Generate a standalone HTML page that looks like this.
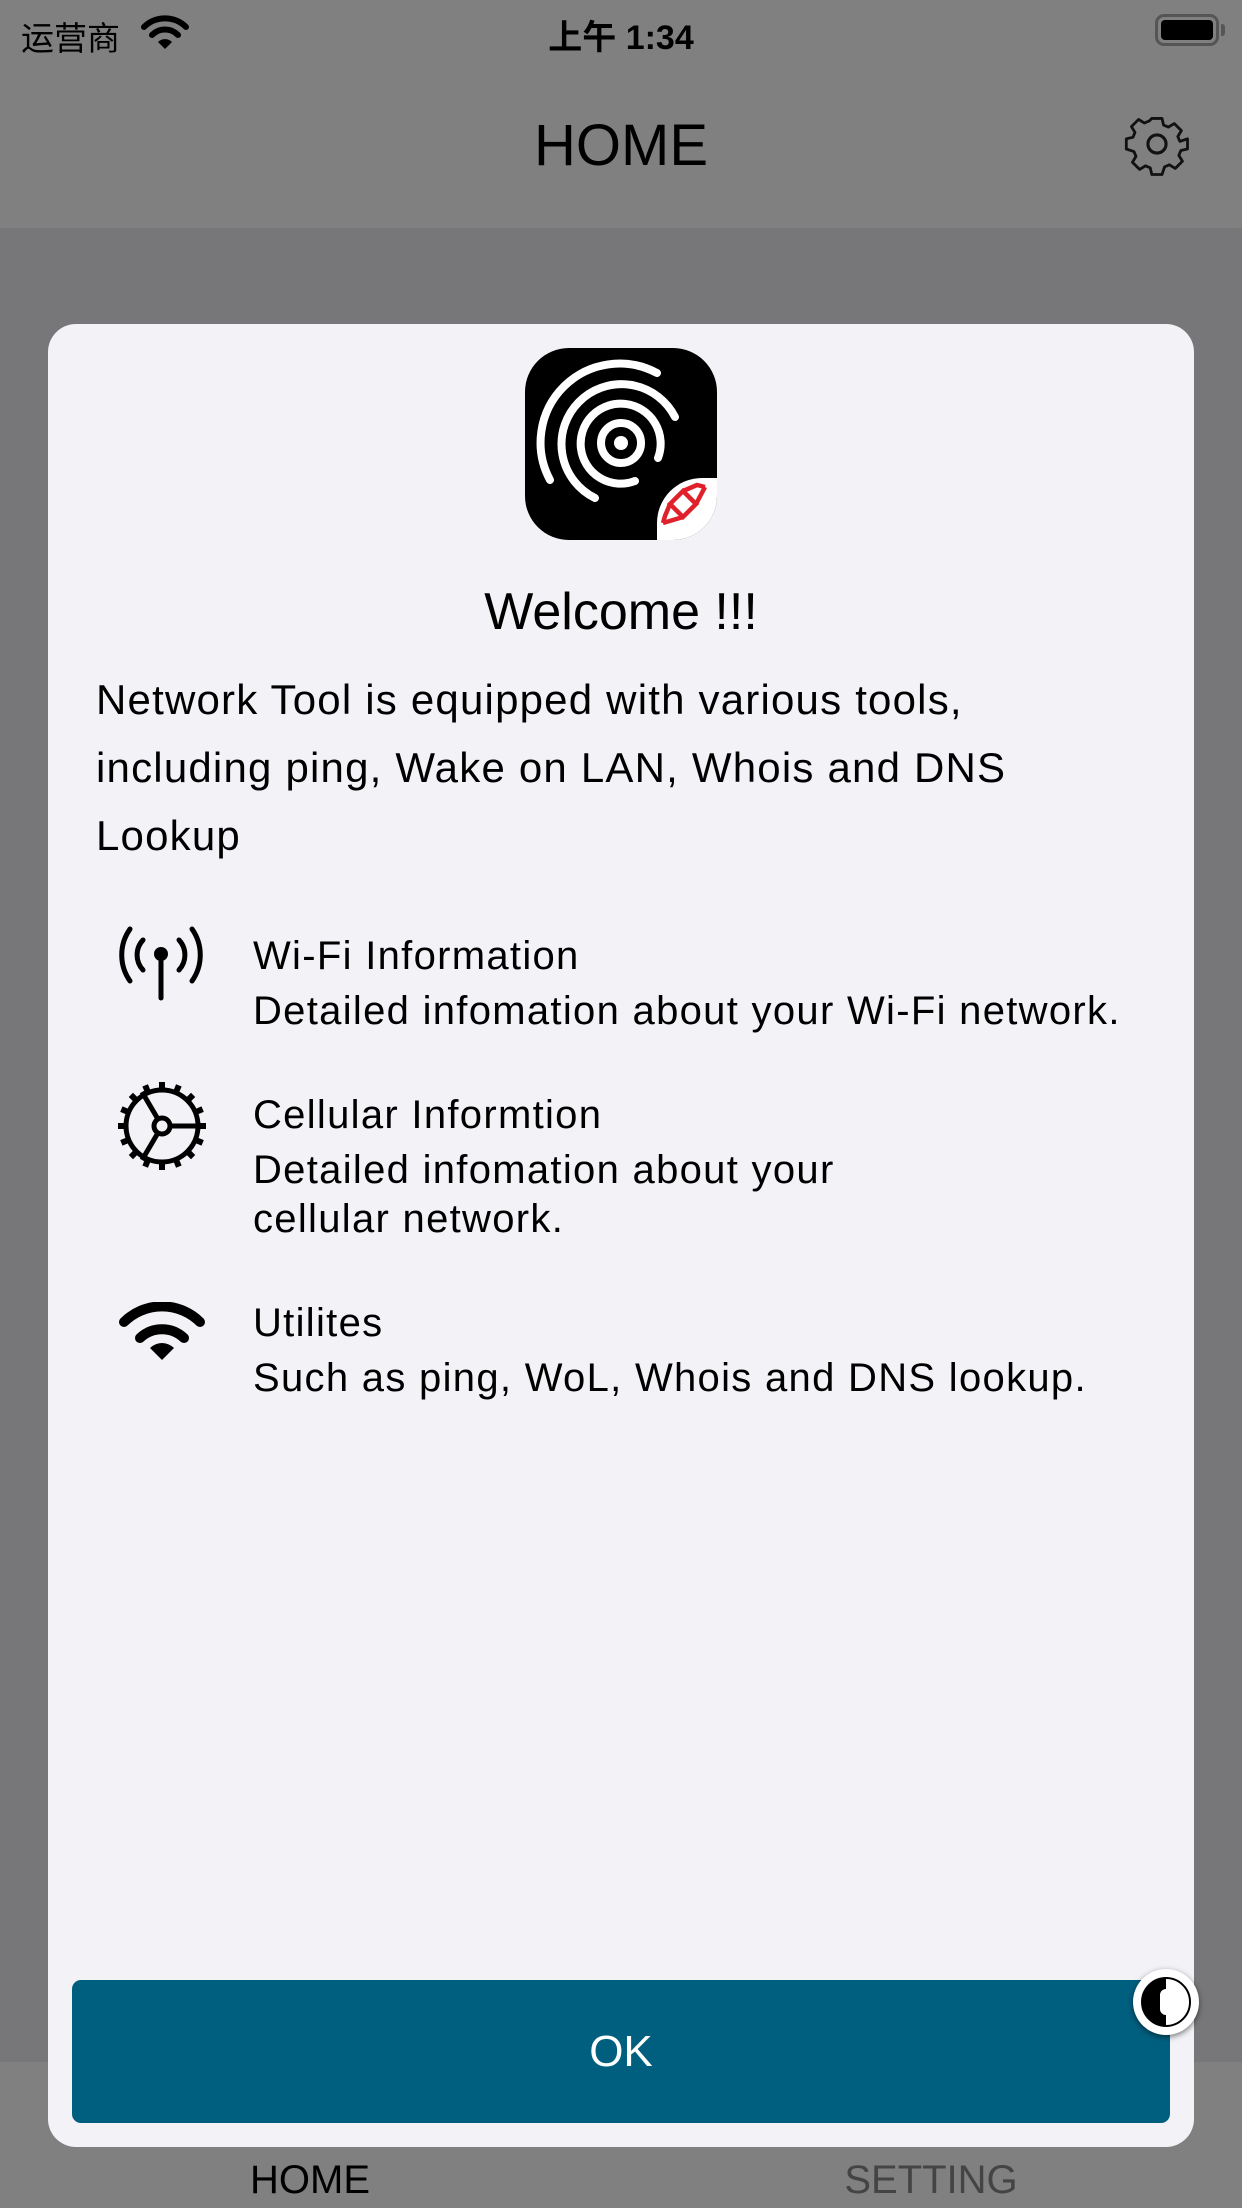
<!DOCTYPE html>
<html><head><meta charset="utf-8"><style>
*{margin:0;padding:0;box-sizing:border-box}
body{width:1242px;height:2208px;position:relative;overflow:hidden;background:#77777a;font-family:"Liberation Sans","Noto Sans CJK SC",sans-serif;color:#000}
.abs{position:absolute}
.top{left:0;top:0;width:1242px;height:228px;background:#808080}
.tab{left:0;top:2062px;width:1242px;height:146px;background:#808080}
.card{left:48px;top:324px;width:1146px;height:1823px;background:#f2f2f7;border-radius:28px}
.t{position:absolute;white-space:nowrap}
.it{font-size:40px;letter-spacing:1.3px}
</style></head><body>
<div class="abs top"></div>
<div class="abs tab"></div>
<div class="t" style="left:21px;top:12px;font-size:33px">运营商</div>
<svg class="abs" style="left:140px;top:14px" width="50" height="36" viewBox="0 0 50 36"><path d="M4 13 A30 30 0 0 1 46 13" stroke="#000" stroke-width="6" fill="none" stroke-linecap="round"/><path d="M12 21 A18 18 0 0 1 38 21" stroke="#000" stroke-width="6" fill="none" stroke-linecap="round"/><path d="M18 28 L25 35 L32 28 A10 10 0 0 0 18 28Z" fill="#000"/></svg>
<div class="t" style="left:0;width:1242px;text-align:center;top:10px;font-size:34px;font-weight:bold">上午 1:34</div>
<div class="abs" style="left:1155px;top:14px;width:64px;height:32px;border:3px solid #555;border-radius:9px;padding:3px"><div style="width:100%;height:100%;background:#000;border-radius:4px"></div></div>
<div class="abs" style="left:1221px;top:24px;width:4px;height:12px;background:#555;border-radius:0 3px 3px 0"></div>
<div class="t" style="left:0;width:1242px;text-align:center;top:112px;font-size:58px">HOME</div>
<svg class="abs" style="left:1123px;top:110px" width="68" height="68" viewBox="0 0 24 24"><path d="M10 2h4l.6 2.6 1.9.8 2.3-1.4 2.8 2.8-1.4 2.3.8 1.9L24 10v4l-2.6.6-.8 1.9 1.4 2.3-2.8 2.8-2.3-1.4-1.9.8L14 24h-4l-.6-2.6-1.9-.8-2.3 1.4-2.8-2.8 1.4-2.3-.8-1.9L0 14v-4l2.6-.6.8-1.9L2 5.2 4.8 2.4l2.3 1.4 1.9-.8z" transform="scale(.9) translate(1.3 1.3)" fill="none" stroke="#111" stroke-width="1.1" stroke-linejoin="round"/><circle cx="12" cy="12" r="3.2" fill="none" stroke="#111" stroke-width="1.1"/></svg>

<div class="abs card"></div>
<svg class="abs" style="left:525px;top:348px" width="192" height="192" viewBox="0 0 192 192">
<defs><clipPath id="c"><rect width="192" height="192" rx="44"/></clipPath></defs>
<g clip-path="url(#c)"><rect width="192" height="192" fill="#000"/>
<circle cx="96" cy="95" r="7" fill="#fff"/>
<g fill="none" stroke="#fff" stroke-width="8" stroke-linecap="round">
<circle cx="96" cy="95" r="20"/>
<path d="M133 110 A40 40 0 1 0 110 133"/>
<path d="M150 69 A60 60 0 1 0 70 150"/>
<path d="M132 25 A79 79 0 0 0 25 132"/>
</g>
<path d="M132 192 L132 175 A45 45 0 0 1 177 130 L192 130 L192 192Z" fill="#fff"/>
<g fill="none" stroke="#e0202a" stroke-width="4.5" stroke-linejoin="miter">
<path d="M158 143 L171 156 L158 169 L145 156Z"/>
<path d="M158 143 L172 137 L180 139"/>
<path d="M171 156 L180 139"/>
<path d="M145 156 L140 168 L138 175"/>
<path d="M158 169 L138 175"/>
</g>
</g></svg>
<div class="t" style="left:0;width:1242px;text-align:center;top:582px;font-size:52px">Welcome !!!</div>
<div class="abs" style="left:96px;top:666px;width:960px;font-size:42px;line-height:68px;letter-spacing:1.2px">Network Tool is equipped with various tools, including ping, Wake on LAN, Whois and DNS Lookup</div>

<svg class="abs" style="left:116px;top:924px" width="90" height="82" viewBox="0 0 90 82"><g fill="none" stroke="#000" stroke-width="5" stroke-linecap="round"><path d="M14 5 A45 45 0 0 0 14 57"/><path d="M27 16 A22 22 0 0 0 27 46"/><path d="M76 5 A45 45 0 0 1 76 57"/><path d="M63 16 A22 22 0 0 1 63 46"/><path d="M45 30 V74"/></g><circle cx="45" cy="30" r="7"/></svg>
<div class="t it" style="left:253px;top:934px">Wi-Fi Information</div>
<div class="t it" style="left:253px;top:989px">Detailed infomation about your Wi-Fi network.</div>

<svg class="abs" style="left:118px;top:1082px" width="88" height="88" viewBox="0 0 88 88"><circle cx="44" cy="44" r="36" fill="none" stroke="#000" stroke-width="5"/><g stroke="#000" stroke-width="5"><line x1="44" y1="44" x2="82" y2="44"/><line x1="44" y1="44" x2="24" y2="10"/><line x1="44" y1="44" x2="24" y2="78"/></g><circle cx="44" cy="44" r="8" fill="#f2f2f7" stroke="#000" stroke-width="5"/><g fill="#000"><g id="tt"><rect x="41" y="0" width="6" height="10"/></g><use href="#tt" transform="rotate(22.5 44 44)"/><use href="#tt" transform="rotate(45 44 44)"/><use href="#tt" transform="rotate(67.5 44 44)"/><use href="#tt" transform="rotate(90 44 44)"/><use href="#tt" transform="rotate(112.5 44 44)"/><use href="#tt" transform="rotate(135 44 44)"/><use href="#tt" transform="rotate(157.5 44 44)"/><use href="#tt" transform="rotate(180 44 44)"/><use href="#tt" transform="rotate(202.5 44 44)"/><use href="#tt" transform="rotate(225 44 44)"/><use href="#tt" transform="rotate(247.5 44 44)"/><use href="#tt" transform="rotate(270 44 44)"/><use href="#tt" transform="rotate(292.5 44 44)"/><use href="#tt" transform="rotate(315 44 44)"/><use href="#tt" transform="rotate(337.5 44 44)"/></g></svg>
<div class="t it" style="left:253px;top:1093px">Cellular Informtion</div>
<div class="t it" style="left:253px;top:1148px">Detailed infomation about your</div>
<div class="t it" style="left:253px;top:1197px">cellular network.</div>

<svg class="abs" style="left:118px;top:1302px" width="88" height="62" viewBox="0 0 88 62"><g fill="none" stroke="#000" stroke-width="10" stroke-linecap="round"><path d="M6 20 A54 54 0 0 1 82 20"/><path d="M22 36 A32 32 0 0 1 66 36"/></g><path d="M32 46 L44 58 L56 46 A17 17 0 0 0 32 46Z" fill="#000"/></svg>
<div class="t it" style="left:253px;top:1301px">Utilites</div>
<div class="t it" style="left:253px;top:1356px">Such as ping, WoL, Whois and DNS lookup.</div>

<div class="abs" style="left:72px;top:1980px;width:1098px;height:143px;background:#005f7f;border-radius:9px;color:#fff;font-size:44px;text-align:center;line-height:143px">OK</div>
<div class="abs" style="left:1133px;top:1969px;width:66px;height:66px;border-radius:50%;background:#fff;box-shadow:0 2px 6px rgba(0,0,0,.5)"></div>
<div class="abs" style="left:1141px;top:1977px;width:50px;height:50px;border-radius:50%;background:linear-gradient(90deg,#000 50%,#fff 50%);border:2px solid #000"></div>
<div class="abs" style="left:1160px;top:1989px;width:12px;height:26px;border-radius:6px;background:#fff"></div>

<div class="t" style="left:210px;width:200px;text-align:center;top:2158px;font-size:40px">HOME</div>
<div class="t" style="left:800px;width:262px;text-align:center;top:2158px;font-size:40px;color:#444">SETTING</div>
</body></html>
